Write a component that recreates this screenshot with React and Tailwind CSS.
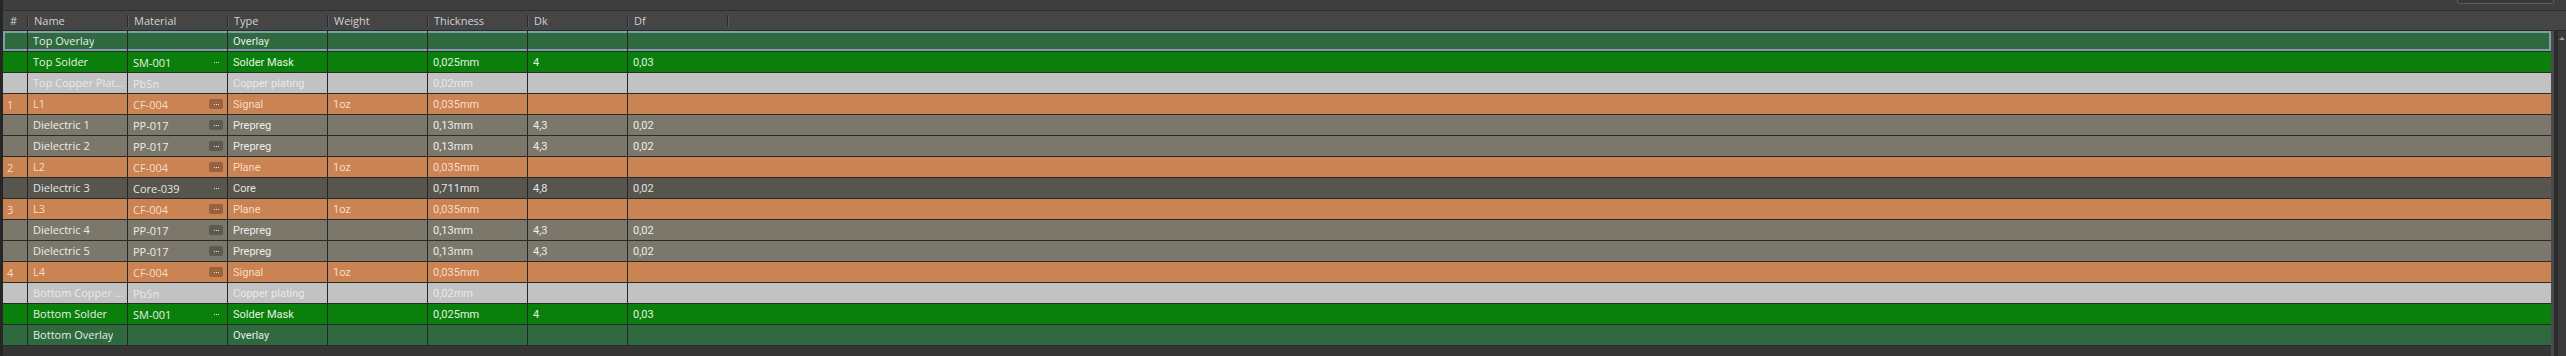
import React from 'react';

const STYLES = {
    overlay: { row: 'bg-[#2e6a3d]', text: 'text-[#e4ece6]', btn: false },
    solder: { row: 'bg-[#0b7f0b]', text: 'text-[#e2f2e2]', btn: false },
    plating: { row: 'bg-[#c2c2c2]', text: 'text-[#e9e9e9]', btn: false },
    copper: { row: 'bg-[#ca8352]', text: 'text-[#f9dcc6]', btn: true },
    prepreg: { row: 'bg-[#7b786b]', text: 'text-[#ececec]', btn: true },
    core: { row: 'bg-[#57564e]', text: 'text-[#e4e4e4]', btn: false },
};

const LAYERS = [
    { kind: 'overlay', name: 'Top Overlay', type: 'Overlay' },
    { kind: 'solder', name: 'Top Solder', material: 'SM-001', dots: true, type: 'Solder Mask', thickness: '0,025mm', dk: '4', df: '0,03' },
    { kind: 'plating', name: 'Top Copper Plating', material: 'PbSn', type: 'Copper plating', thickness: '0,02mm' },
    { kind: 'copper', num: '1', name: 'L1', material: 'CF-004', dots: true, type: 'Signal', weight: '1oz', thickness: '0,035mm' },
    { kind: 'prepreg', name: 'Dielectric 1', material: 'PP-017', dots: true, type: 'Prepreg', thickness: '0,13mm', dk: '4,3', df: '0,02' },
    { kind: 'prepreg', name: 'Dielectric 2', material: 'PP-017', dots: true, type: 'Prepreg', thickness: '0,13mm', dk: '4,3', df: '0,02' },
    { kind: 'copper', num: '2', name: 'L2', material: 'CF-004', dots: true, type: 'Plane', weight: '1oz', thickness: '0,035mm' },
    { kind: 'core', name: 'Dielectric 3', material: 'Core-039', dots: true, type: 'Core', thickness: '0,711mm', dk: '4,8', df: '0,02' },
    { kind: 'copper', num: '3', name: 'L3', material: 'CF-004', dots: true, type: 'Plane', weight: '1oz', thickness: '0,035mm' },
    { kind: 'prepreg', name: 'Dielectric 4', material: 'PP-017', dots: true, type: 'Prepreg', thickness: '0,13mm', dk: '4,3', df: '0,02' },
    { kind: 'prepreg', name: 'Dielectric 5', material: 'PP-017', dots: true, type: 'Prepreg', thickness: '0,13mm', dk: '4,3', df: '0,02' },
    { kind: 'copper', num: '4', name: 'L4', material: 'CF-004', dots: true, type: 'Signal', weight: '1oz', thickness: '0,035mm' },
    { kind: 'plating', name: 'Bottom Copper Plating', material: 'PbSn', type: 'Copper plating', thickness: '0,02mm' },
    { kind: 'solder', name: 'Bottom Solder', material: 'SM-001', dots: true, type: 'Solder Mask', thickness: '0,025mm', dk: '4', df: '0,03' },
    { kind: 'overlay', name: 'Bottom Overlay', type: 'Overlay' },
];

const HEADERS = ['Name', 'Material', 'Type', 'Weight', 'Thickness', 'Dk', 'Df'];

const segoe = "font-['Open_Sans','Noto_Sans',sans-serif]";
const roboto = "font-['Roboto','Liberation_Sans',sans-serif]";

// small "..." button in the material column
const DotsButton = ({ boxed }) => (
    <div className={`flex items-center justify-center gap-px w-[14px] h-[10px] shrink-0 rounded-[2px] ${boxed ? 'bg-black/25' : ''}`}>
        <span className="w-px h-px bg-[#e8e8e8]" />
        <span className="w-px h-px bg-[#e8e8e8]" />
        <span className="w-px h-px bg-[#e8e8e8]" />
    </div>
);

const Cell = ({ children, font = roboto, last = false, className = 'pr-[4px]' }) => (
    <div className={`flex items-center h-full pl-[5px] min-w-0 ${last ? 'flex-1' : 'w-[100px] shrink-0 border-r border-[#262626]'} ${font} ${className}`}>
        {children}
    </div>
);

const LayerRow = ({ layer, first }) => {
    const s = STYLES[layer.kind];
    // selected row gets an inset frame so the columns stay aligned
    const frame = first ? 'shadow-[inset_0_0_0_2px_#7f9daa]' : '';
    return (
        <div className={`flex h-[21px] shrink-0 border-b border-[#2a2a2a] text-[11px] leading-[15px] ${s.row} ${s.text} ${frame}`}>
            <div className={`flex items-center w-[25px] shrink-0 h-full border-r border-[#262626] pl-[4px] ${segoe}`}>
                {layer.num}
            </div>
            <Cell font={segoe} className="pr-[2px]">
                <span className="truncate leading-[16px]">{layer.name}</span>
            </Cell>
            <Cell font={segoe} className="justify-between pr-[4px]">
                <span>{layer.material}</span>
                {layer.dots && <DotsButton boxed={s.btn} />}
            </Cell>
            <Cell>{layer.type}</Cell>
            <Cell>{layer.weight}</Cell>
            <Cell>{layer.thickness}</Cell>
            <Cell>{layer.dk}</Cell>
            <Cell last>{layer.df}</Cell>
        </div>
    );
};

const Grip = () => (
    <div className="flex h-[12px] shrink-0">
        <span className="w-px h-full bg-[#2a2a2a]" />
        <span className="w-px h-full bg-[#575757]" />
    </div>
);

const HeaderCell = ({ label }) => (
    <div className="flex items-center h-full w-[100px] shrink-0">
        <Grip />
        <span className="pl-[5px]">{label}</span>
    </div>
);

const App = () => {
    return (
        <div className={`flex w-[2566px] h-[356px] overflow-hidden bg-[#353535] ${segoe}`}>
            <div className="w-[3px] shrink-0 bg-[#262626]" />
            <div className="flex flex-col flex-1 min-w-0">
                {/* toolbar strip */}
                <div className="flex justify-end h-[11px] shrink-0 bg-[#3e3e3e] border-b border-[#2d2d2d] pr-[12px]">
                    <div className="w-[97px] h-[4px] rounded-b-[2px] border border-t-0 border-[#5c5c5c] bg-[#393939]" />
                </div>

                {/* column header */}
                <div className="flex items-center h-[20px] shrink-0 bg-[#454545] border-b border-[#2b2b2b] text-[11px] leading-[15px] text-[#d2d2d2]">
                    <div className="w-[24px] shrink-0 pl-[7px]">#</div>
                    {HEADERS.map(h => <HeaderCell key={h} label={h} />)}
                    <Grip />
                </div>

                {/* stack rows + scrollbar */}
                <div className="flex flex-1 min-h-0">
                    <div className="flex flex-col flex-1 min-w-0">
                        {LAYERS.map((l, i) => <LayerRow key={l.name} layer={l} first={i === 0} />)}
                    </div>
                    <div className="flex w-[15px] shrink-0">
                        <div className="w-[3px] bg-[#4b4b4b]" />
                        <div className="w-[4px] bg-[#2c2c2c]" />
                        <div className="flex-1 bg-[#3b3b3b] flex justify-center pt-[6px]">
                            <div className="w-0 h-0 border-l-[3px] border-r-[3px] border-b-[3px] border-l-transparent border-r-transparent border-b-[#9a9a9a]" />
                        </div>
                    </div>
                </div>
            </div>
        </div>
    );
};

export default App;
